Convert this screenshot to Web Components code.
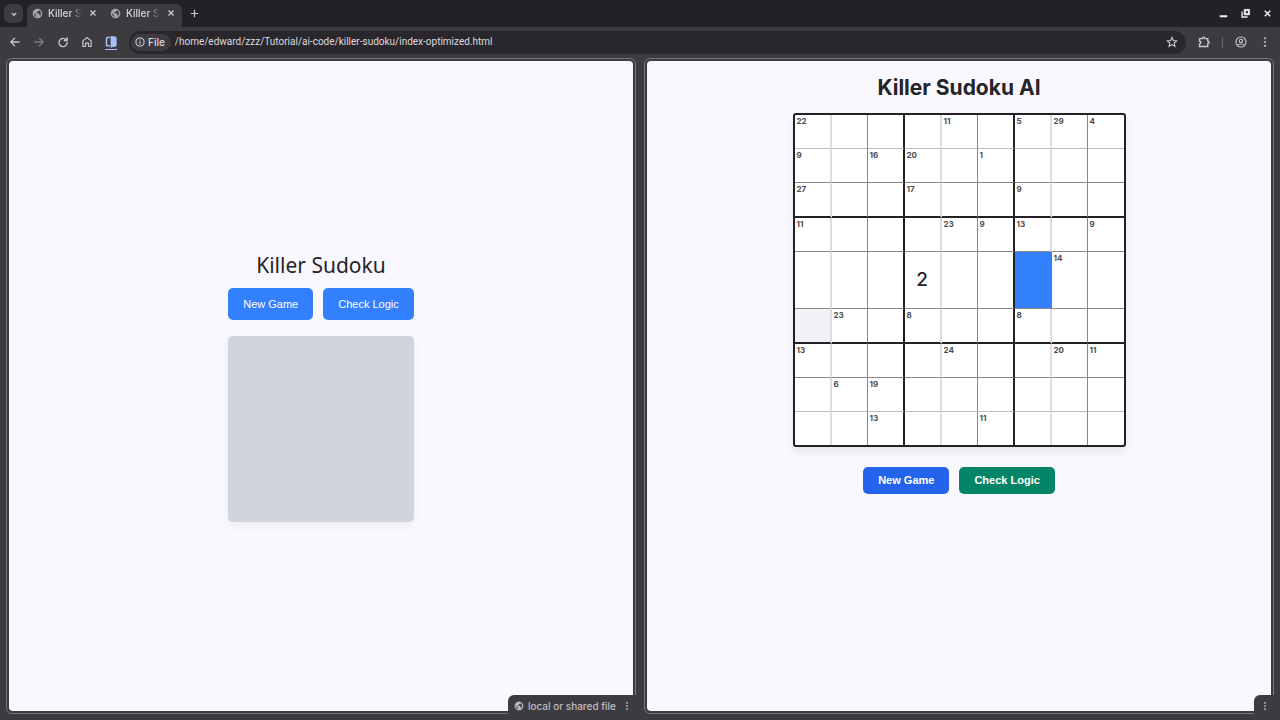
<!DOCTYPE html>
<html lang="en">
<head>
<meta charset="utf-8">
<title>Killer Sudoku</title>
<style>
html,body{margin:0;height:100%}
body{font-family:Inter,sans-serif;background:#3d3b40;overflow:hidden}
</style>
</head>
<body>
<browser-window></browser-window>
<script>
const icons = {
  chevron:'<path d="M4.500 6.500 8 10l3.500-3.500" stroke-width="2"/>',
  globe:'<path transform="scale(.667)" d="M12 2C6.480 2 2 6.480 2 12s4.480 10 10 10 10-4.480 10-10S17.520 2 12 2zm-1 17.930c-3.950-.490-7-3.850-7-7.930 0-.620.080-1.210.210-1.790L9 15v1c0 1.100.900 2 2 2v1.930zm6.900-2.540c-.260-.810-1-1.390-1.900-1.390h-1v-3c0-.550-.450-1-1-1H8v-2h2c.550 0 1-.450 1-1V7h2c1.100 0 2-.900 2-2v-.410c2.930 1.190 5 4.060 5 7.410 0 2.080-.800 3.970-2.100 5.390z" fill="currentColor" stroke-width="1"/>',
  close:'<path d="m4 4 8 8m0-8-8 8" stroke-width="2.200"/>',
  plus:'<path d="M8 2.500v11M2.500 8h11" stroke-width="1.800"/>',
  back:'<path d="M14 8H3m5-5.500L2.500 8 8 13.500" stroke-width="1.800"/>',
  forward:'<path d="M2 8h11M8 2.500 13.500 8 8 13.500" stroke-width="1.800"/>',
  reload:'<path d="M12.500 5.500A5.500 5.500 0 1 0 13.500 8M13.500 1.500V6H9" stroke-width="1.800"/>',
  home:'<path d="M2.500 6.500 8 2l5.500 4.500v7.500h-3.500V9.500H6V14H2.500z" stroke-width="1.600"/>',
  split:'<path d="M6.500 2H3.500Q2 2 2 3.500v8Q2 13 3.500 13h3" stroke-width="2"/><path d="M8 0h1.500v1H13q2 0 2 2v9q0 2-2 2H9.500v1H8z" fill="currentColor" stroke-width="1"/>',
  info:'<circle cx="8" cy="8" r="6.500" stroke-width="1.600"/><path d="M8 7v4.500M8 4v1.700" stroke-width="1.700"/>',
  star:'<path d="m8 2 1.800 4.100 4.500.400-3.400 2.900 1 4.400L8 11.500l-3.900 2.300 1-4.400L1.700 6.500l4.500-.400z" stroke-width="1.500"/>',
  puzzle:'<path d="M2 3.500h4C6 .800 9 .800 9 3.500h4V7c2.700 0 2.700 3 0 3v4H2v-3.500c2.500 0 2.500-3.500 0-3.500z" stroke-width="1.800"/>',
  user:'<circle cx="8" cy="8" r="6.700" stroke-width="1.500"/><circle cx="8" cy="6.500" r="2.200" stroke-width="1.500"/><path d="M3.500 12.500c2-2.500 7-2.500 9 0" stroke-width="1.500"/>',
  dots:'<path d="M7 2h2v2H7zM7 7h2v2H7zM7 12h2v2H7z" fill="currentColor" stroke-width=".5"/>',
  minimize:'<path d="M2.500 12h11" stroke-width="3"/>',
  restore:'<path d="M6 2h8v8H6z" fill="currentColor" stroke-width="1"/><path d="M3 5v8h8" stroke-width="2"/><path d="M8.500 4.500h3v3h-3z" fill="#232125" stroke="none"/>'
};
const define = (name, css, html) => customElements.define(name, class extends HTMLElement {
  connectedCallback(){
    if(this.shadowRoot) return;
    const root=this.attachShadow({mode:'open'});
    root.innerHTML=`<style>*{box-sizing:border-box}${css}</style>${typeof html==='function'?html(this):html}`;
  }
});

define('ui-icon',
  ':host{display:block;width:12px;height:12px;flex:none}svg{display:block;width:100%;height:100%;fill:none;stroke:currentColor}',
  el=>`<svg viewBox="0 0 16 16" aria-hidden="true">${icons[el.getAttribute('name')]}</svg>`);

define('icon-button',
  `:host{display:block;flex:none;width:24px;height:24px;color:#c9c7cb}
  button{width:100%;height:100%;border:0;padding:0;background:none;color:inherit;display:grid;place-items:center;border-radius:6px}
  ui-icon{width:var(--icon,12px);height:var(--icon,12px)}`,
  el=>`<button aria-label="${el.getAttribute('label')}"><ui-icon name="${el.getAttribute('name')}"></ui-icon></button>`);

define('browser-tab',
  `:host{display:flex;align-items:center;width:78px;color:#d8d6da;font:500 10px/16px Inter,sans-serif}
  ui-icon{width:11px;height:11px;color:#a9a7ab}
  span{width:34px;margin-left:5px;overflow:hidden;white-space:nowrap;-webkit-mask-image:linear-gradient(90deg,#000 22px,transparent 34px)}
  icon-button{width:18px;height:18px;margin-left:2px;--icon:10px}`,
  '<ui-icon name="globe"></ui-icon><span><slot></slot></span><icon-button name="close" label="Close tab"></icon-button>');

define('tab-strip',
  `:host{display:flex;height:27px;background:#232125;align-items:center;padding:0 2px 0 4px}
  .search{width:19px;height:19px;background:#3d3b40;border-radius:6px;--icon:10px}
  .group{display:flex;height:23px;align-self:end;background:#3d3b40;border-radius:6px 6px 0 0;margin-left:4px;padding:0 0 5px 5px}
  .group browser-tab:last-child{width:72px}
  .add{width:24px;--icon:11px}
  .window{display:flex;margin-left:auto;--icon:11px}
  .window icon-button{width:22px;color:#efedf0}`,
  `<icon-button class="search" name="chevron" label="Search tabs"></icon-button>
  <div class="group"><browser-tab>Killer Sudoku</browser-tab><browser-tab>Killer Sudoku</browser-tab></div>
  <icon-button class="add" name="plus" label="New tab"></icon-button>
  <div class="window"><icon-button name="minimize" label="Minimize"></icon-button><icon-button name="restore" label="Restore"></icon-button><icon-button name="close" label="Close window"></icon-button></div>`);

define('tool-bar',
  `:host{display:flex;height:30px;align-items:center;padding:0 3px;background:#3d3b40}
  .off{color:#7d7b80}
  .split{color:#a8c0f5;border-bottom:1px solid;width:12px;height:15px;margin:0 6px;--icon:12px}
  .address{flex:1;display:flex;align-items:center;height:23px;margin-left:6px;padding:0 2px;background:#29272b;border-radius:12px}
  .file{display:flex;align-items:center;gap:3px;height:17px;padding:0 6px 0 4px;background:#3d3b40;border-radius:9px;color:#dddbdf;font:500 10px/16px Inter,sans-serif}
  .file ui-icon{width:10px;height:10px}
  input{flex:1;min-width:0;border:0;outline:0;padding:0;margin-left:4px;background:none;color:#dddbdf;font:10px/16px Roboto,sans-serif}
  .bar{width:1px;height:11px;background:#68666b;margin:0 6px}
  .ext{margin-left:6px}`,
  `<icon-button name="back" label="Back"></icon-button><icon-button class="off" name="forward" label="Forward"></icon-button>
  <icon-button name="reload" label="Reload"></icon-button><icon-button name="home" label="Home"></icon-button>
  <icon-button class="split" name="split" label="Split view"></icon-button>
  <div class="address"><span class="file"><ui-icon name="info"></ui-icon>File</span>
  <input aria-label="Address" value="/home/edward/zzz/Tutorial/ai-code/killer-sudoku/index-optimized.html">
  <icon-button name="star" label="Bookmark"></icon-button></div>
  <icon-button class="ext" name="puzzle" label="Extensions"></icon-button><span class="bar"></span>
  <icon-button name="user" label="Profile"></icon-button><icon-button name="dots" label="Menu"></icon-button>`);

define('split-pane',
  `:host{display:block;position:relative;flex:1;min-width:0;border:1px solid #77757a;border-radius:6px;padding:2px}
  .page{height:100%;background:#f9f8fe;border-radius:4px;overflow:hidden}
  .chip{position:absolute;right:-1px;bottom:-1px;height:19px;padding-top:2px;display:flex;align-items:center;background:#3d3b40;border-radius:6px 0 0 0;color:#bebcc0;white-space:nowrap}`,
  '<div class="page"><slot></slot></div><div class="chip"><slot name="status"></slot></div>');

define('page-status',
  `:host{display:flex;align-items:center;padding-left:6px;font:500 10px/16px Inter,sans-serif}
  :host([compact]){padding-left:0}
  ui-icon{width:10px;height:10px}
  span{margin-left:4px}icon-button{width:18px;height:16px;margin-left:2px;--icon:10px}`,
  el=>(el.hasAttribute('compact')?'':'<ui-icon name="globe"></ui-icon><span><slot></slot></span>')+'<icon-button name="dots" label="View options"></icon-button>');

define('action-button',
  `:host{display:block}
  button{height:var(--h,32px);padding:0 15px;border:0;border-radius:5px;background:var(--fill,#3380ff);color:#fff;font:var(--weight,400) 11px/15px "Liberation Sans",Arial,sans-serif;white-space:nowrap}`,
  '<button><slot></slot></button>');

define('sudoku-start',
  `:host{height:100%;display:flex;align-items:center;justify-content:center}
  main{display:flex;flex-direction:column;width:min-content}
  h1{margin:0 0 8px;text-align:center;font:450 21px/30px "Noto Sans",sans-serif;color:#252428;white-space:nowrap}
  .actions{display:flex;gap:10px}
  .board{aspect-ratio:1;margin-top:16px;background:#d1d4dd;border-radius:5px;box-shadow:0 4px 8px #0000000e}`,
  `<main><h1>Killer Sudoku</h1><div class="actions"><action-button>New Game</action-button><action-button>Check Logic</action-button></div><div class="board"></div></main>`);

const cages=[
  '22,,,,11,,5,29,4','9,,16,20,,1,,,','27,,,17,,,9,,','11,,,,23,9,13,,9',',,,,,,,14,',
  ',23,,8,,,8,,','13,,,,24,,,20,11',',6,19,,,,,,',',,13,,,11,,,'].map(r=>r.split(','));
define('sudoku-board',
  `:host{display:block;width:333px;border:2px solid #232125;border-radius:3px;background:#fff;box-shadow:0 5px 9px #00000014}
  table{width:100%;table-layout:fixed;border-collapse:separate;border-spacing:0}
  td{width:37px;height:34px;padding:0 0 0 2px;vertical-align:top;border:0 solid #88868a;border-width:0 1px 1px 0;font:700 8px/12px Inter,sans-serif;color:#4b494e}
  td:nth-child(3n+1){border-right:2px solid #dfdde2}
  td:nth-child(3n+2){width:36px}
  td:nth-child(3n){border-right:2px solid #232125}
  td:last-child{width:auto}
  tr:nth-child(3n) td{height:35px;border-bottom:2px solid #232125}
  tr:nth-child(1) td,tr:nth-child(8) td{border-bottom-color:#bdbbc0}
  tr:nth-child(5) td{height:57px}
  tr td:last-child{border-right:0}
  tr:last-child td{height:33px;border-bottom:0}
  td.value{padding:0;vertical-align:middle;text-align:center;font:500 19px/24px Inter,sans-serif;color:#252428}
  tr td.selected{background:#3380ff;border-right-color:#3380ff}
  td.peer{background:#f2f1f5}`,
  `<table aria-label="Sudoku board"><tbody>${cages.map((r,y)=>`<tr>${r.map((n,x)=>{
    if(y===4&&x===3) return '<td class="value">2</td>';
    const c=y===4&&x===6?' class="selected"':y===5&&x===0?' class="peer"':'';
    return `<td${c}>${n}</td>`;}).join('')}</tr>`).join('')}</tbody></table>`);

define('sudoku-game',
  `:host{display:flex;flex-direction:column;align-items:center;padding-top:12px}
  h1{margin:0 0 10px;font:700 21px/30px Inter,sans-serif;color:#252428}
  .actions{display:flex;gap:10px;margin-top:20px;--weight:700;--h:27px}
  .new{--fill:#2463eb}.check{--fill:#058567}`,
  `<h1>Killer Sudoku AI</h1><sudoku-board></sudoku-board><div class="actions"><action-button class="new">New Game</action-button><action-button class="check">Check Logic</action-button></div>`);

define('browser-window',
  `:host{display:flex;flex-direction:column;height:100vh}
  .views{flex:1;min-height:0;display:flex;gap:8px;padding:1px 6px 6px}`,
  `<tab-strip></tab-strip><tool-bar></tool-bar>
  <div class="views"><split-pane><sudoku-start></sudoku-start><page-status slot="status">local or shared file</page-status></split-pane>
  <split-pane><sudoku-game></sudoku-game><page-status slot="status" compact></page-status></split-pane></div>`);
</script>
</body>
</html>
